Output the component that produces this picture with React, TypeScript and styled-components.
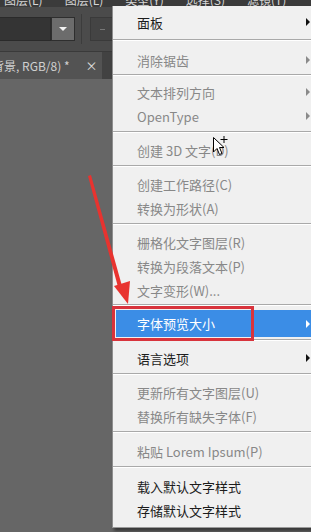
import React, { FC } from 'react';
import styled, { createGlobalStyle } from 'styled-components';

const GlobalStyle = createGlobalStyle`
  html, body {
    margin: 0;
    padding: 0;
    width: 311px;
    height: 532px;
    overflow: hidden;
    background: #666666;
  }
  body {
    font-family: "Noto Sans CJK SC", "Noto Sans", sans-serif;
  }
`;

const Screen = styled.div`
  position: relative;
  width: 311px;
  height: 532px;
  overflow: hidden;
  display: flex;
  flex-direction: column;
  background: #666666;
`;

const MenuBar = styled.div`
  height: 7px;
  background: #3b3b3b;
  display: flex;
  gap: 22px;
  padding-left: 4px;
  overflow: hidden;
`;

const MenuBarItem = styled.span`
  font-size: 12px;
  line-height: 12px;
  margin-top: -6px;
  color: #d6d6d6;
  white-space: nowrap;
`;

const Toolbar = styled.div`
  height: 44px;
  background: #4b4b4b;
  display: flex;
  align-items: center;
  border-bottom: 1px solid #3a3a3a;
`;

const Field = styled.div`
  width: 50px;
  height: 22px;
  background: #343434;
  border: 1px solid #2a2a2a;
  border-left: none;
`;

const DropButton = styled.div`
  width: 22px;
  height: 22px;
  background: #6c6c6c;
  border: 1px solid #2e2e2e;
  display: flex;
  align-items: center;
  justify-content: center;
  &::after {
    content: '';
    border-left: 4px solid transparent;
    border-right: 4px solid transparent;
    border-top: 4px solid #f2f2f2;
  }
`;

const ToolSep = styled.div`
  width: 1px;
  height: 30px;
  background: #3c3c3c;
  margin: 0 8px 0 6px;
`;

const DimButton = styled.div`
  width: 22px;
  height: 22px;
  background: #444444;
  border: 1px solid #3a3a3a;
  display: flex;
  align-items: center;
  justify-content: center;
  &::after {
    content: '';
    width: 5px;
    height: 1px;
    background: #777;
  }
`;

const TabBar = styled.div`
  height: 27px;
  background: #424242;
  display: flex;
`;

const Tab = styled.div`
  width: 110px;
  background: #535353;
  display: flex;
  align-items: center;
  gap: 16px;
  font-size: 12px;
  color: #d0d0d0;
  white-space: nowrap;
  margin-left: -8px;
`;

const TabClose = styled.span`
  font-size: 12px;
  color: #e0e0e0;
`;

const Canvas = styled.div`
  flex: 1;
  background: #666666;
`;

const Menu = styled.div`
  position: absolute;
  left: 112px;
  top: 6px;
  width: 202px;
  padding: 4px 0 5px;
  background: #f0f0f0;
  border-left: 1px solid #8e8e8e;
  border-bottom: 1px solid #9a9a9a;
  box-shadow: 2px 3px 3px rgba(0, 0, 0, 0.45);
`;

type Tone = 'dark' | 'gray' | 'active';

const Row = styled.div<{ $tone: Tone }>`
  position: relative;
  height: ${({ $tone }) => ($tone === 'active' ? 27 : 24)}px;
  margin: ${({ $tone }) => ($tone === 'active' ? '0 0 0 3px' : '0')};
  padding-left: ${({ $tone }) => ($tone === 'active' ? 21 : 24)}px;
  display: flex;
  align-items: center;
  font-size: 13px;
  white-space: nowrap;
  color: ${({ $tone }) =>
    $tone === 'dark' ? '#1c1c1c' : $tone === 'active' ? '#ffffff' : '#888888'};
  background: ${({ $tone }) => ($tone === 'active' ? '#3b8de6' : 'transparent')};
`;

const SubArrow = styled.span<{ $color: string }>`
  position: absolute;
  right: 5px;
  top: 50%;
  margin-top: -4px;
  border-top: 4px solid transparent;
  border-bottom: 4px solid transparent;
  border-left: 4px solid ${({ $color }) => $color};
`;

const Separator = styled.div<{ $h: number }>`
  height: ${({ $h }) => $h}px;
  padding-top: ${({ $h }) => Math.max(0, Math.floor($h / 2) - 2)}px;
  box-sizing: border-box;
  display: flex;
  flex-direction: column;
  &::before {
    content: '';
    height: 1px;
    background: #a9a9a9;
  }
  &::after {
    content: '';
    height: 1px;
    background: #ffffff;
  }
`;

const HighlightBox = styled.div`
  position: absolute;
  left: 112px;
  top: 306px;
  width: 136px;
  height: 29px;
  border: 3px solid #d8333c;
  pointer-events: none;
`;

const Overlay = styled.svg`
  position: absolute;
  left: 0;
  top: 0;
  pointer-events: none;
`;

type Item =
  | { kind: 'sep'; h: number }
  | { kind: 'item'; label: string; tone: Tone; sub?: boolean };

const items: Item[] = [
  { kind: 'item', label: '面板', tone: 'dark', sub: true },
  { kind: 'sep', h: 14 },
  { kind: 'item', label: '消除锯齿', tone: 'gray', sub: true },
  { kind: 'sep', h: 8 },
  { kind: 'item', label: '文本排列方向', tone: 'gray', sub: true },
  { kind: 'item', label: 'OpenType', tone: 'gray', sub: true },
  { kind: 'sep', h: 10 },
  { kind: 'item', label: '创建 3D 文字(D)', tone: 'gray' },
  { kind: 'sep', h: 10 },
  { kind: 'item', label: '创建工作路径(C)', tone: 'gray' },
  { kind: 'item', label: '转换为形状(A)', tone: 'gray' },
  { kind: 'sep', h: 10 },
  { kind: 'item', label: '栅格化文字图层(R)', tone: 'gray' },
  { kind: 'item', label: '转换为段落文本(P)', tone: 'gray' },
  { kind: 'item', label: '文字变形(W)...', tone: 'gray' },
  { kind: 'sep', h: 8 },
  { kind: 'item', label: '字体预览大小', tone: 'active', sub: true },
  { kind: 'sep', h: 9 },
  { kind: 'item', label: '语言选项', tone: 'dark', sub: true },
  { kind: 'sep', h: 10 },
  { kind: 'item', label: '更新所有文字图层(U)', tone: 'gray' },
  { kind: 'item', label: '替换所有缺失字体(F)', tone: 'gray' },
  { kind: 'sep', h: 11 },
  { kind: 'item', label: '粘贴 Lorem Ipsum(P)', tone: 'gray' },
  { kind: 'sep', h: 11 },
  { kind: 'item', label: '载入默认文字样式', tone: 'dark' },
  { kind: 'item', label: '存储默认文字样式', tone: 'dark' },
];

const arrowColor = (tone: Tone) =>
  tone === 'dark' ? '#111111' : tone === 'active' ? '#ffffff' : '#8a8a8a';

const TypeMenu: FC = () => (
  <Menu>
    {items.map((it, i) =>
      it.kind === 'sep' ? (
        <Separator key={i} $h={it.h} />
      ) : (
        <Row key={i} $tone={it.tone}>
          {it.label}
          {it.sub && <SubArrow $color={arrowColor(it.tone)} />}
        </Row>
      )
    )}
  </Menu>
);

const App: FC = () => (
  <>
    <GlobalStyle />
    <Screen>
      <MenuBar>
        <MenuBarItem>图层(L)</MenuBarItem>
        <MenuBarItem>图层(L)</MenuBarItem>
        <MenuBarItem>类型(Y)</MenuBarItem>
        <MenuBarItem>选择(S)</MenuBarItem>
        <MenuBarItem>滤镜(T)</MenuBarItem>
      </MenuBar>
      <Toolbar>
        <Field />
        <DropButton />
        <ToolSep />
        <DimButton />
      </Toolbar>
      <TabBar>
        <Tab>
          背景, RGB/8) *<TabClose>×</TabClose>
        </Tab>
      </TabBar>
      <Canvas />
      <TypeMenu />
      <HighlightBox />
      <Overlay width="311" height="532" viewBox="0 0 311 532">
        <polygon points="88,176 91,175 122,286 118,287" fill="#e8332f" />
        <polygon points="128,304 130,281 114,286" fill="#e8332f" />
        <g transform="translate(213,137)">
          <path
            d="M0.5 0.5 L0.5 15 L4 11.5 L6.5 17.5 L9 16.5 L6.5 10.5 L11 10.5 Z"
            fill="#ffffff"
            stroke="#000000"
            strokeWidth="1"
            strokeLinejoin="round"
          />
          <path d="M11 -1 V6 M7.5 2.5 H14.5" stroke="#000" strokeWidth="1" />
        </g>
      </Overlay>
    </Screen>
  </>
);

export default App;
